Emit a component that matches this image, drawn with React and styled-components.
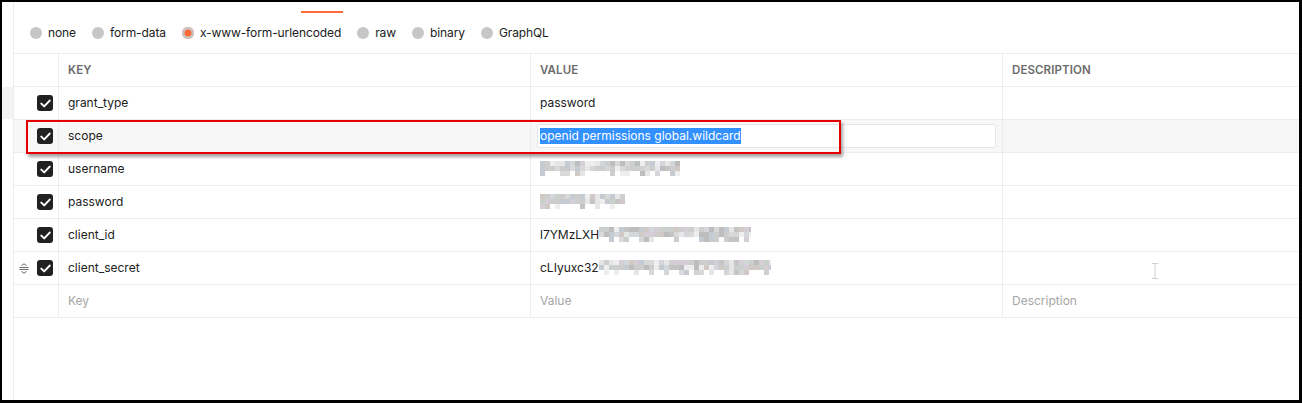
import React from "react";
import styled, { createGlobalStyle } from "styled-components";

const Global = createGlobalStyle`
  html, body { margin: 0; padding: 0; background: #fff; }
  body { font-family: Inter, "Noto Sans", sans-serif; -webkit-font-smoothing: antialiased; }
  * { box-sizing: border-box; }
`;

const Frame = styled.div`
  width: 1302px;
  height: 403px;
  border-style: solid;
  border-color: #000;
  border-width: 2px 3px 3px 2px;
  display: flex;
  background: #fff;
  overflow: hidden;
`;

const LeftStrip = styled.div`
  width: 11px;
  flex: none;
  display: flex;
  flex-direction: column;
`;

const StripShade = styled.div`
  margin-top: ${(p) => p.$top}px;
  height: ${(p) => p.$h}px;
  background: #f3f3f3;
`;

const Panel = styled.div`
  flex: 1;
  border-left: 1px solid #ececec;
  display: flex;
  flex-direction: column;
  position: relative;
`;

const TabStrip = styled.div`
  height: 11px;
  display: flex;
  align-items: flex-end;
  padding-left: 287px;
`;

const ActiveTab = styled.div`
  width: 42px;
  height: 2px;
  background: #ff6c37;
`;

const RadioRow = styled.div`
  height: 40px;
  display: flex;
  align-items: center;
  padding-left: 16px;
  gap: 16px;
  font-size: 12px;
  letter-spacing: -0.1px;
  color: #212121;
`;

const RadioItem = styled.label`
  display: flex;
  align-items: center;
  gap: 6px;
  line-height: 14px;
`;

const RadioDot = styled.span`
  width: 12px;
  height: 12px;
  border-radius: 50%;
  background: ${(p) => (p.$on ? "#ff6c37" : "#c6c6c6")};
  box-shadow: ${(p) => (p.$on ? "inset 0 0 0 2.5px #c6c6c6" : "none")};
  flex: none;
`;

const Table = styled.div`
  border-top: 1px solid #ececec;
  position: relative;
`;

const Row = styled.div`
  display: grid;
  grid-template-columns: 45px 472px 472px 1fr;
  height: 33px;
  border-bottom: 1px solid #ececec;
  background: ${(p) => (p.$active ? "#f7f7f7" : "#fff")};
`;

const Cell = styled.div`
  display: flex;
  align-items: center;
  padding: 0 9px 1px;
  font-size: 12px;
  color: ${(p) => (p.$placeholder ? "#a6a6a6" : "#212121")};
  border-right: ${(p) => (p.$last ? "none" : "1px solid #ececec")};
  white-space: nowrap;
  overflow: hidden;
`;

const HeadCell = styled(Cell)`
  font-size: 11.5px;
  font-weight: 600;
  color: #6b6b6b;
  letter-spacing: 0.1px;
`;

const CheckCell = styled.div`
  display: flex;
  align-items: center;
  justify-content: flex-end;
  padding-right: 5px;
  gap: 8px;
  border-right: 1px solid #ececec;
`;

const CheckBox = styled.span`
  width: 16px;
  height: 16px;
  border-radius: 3px;
  background: #212121;
  display: flex;
  align-items: center;
  justify-content: center;
`;

const ValueInput = styled.div`
  flex: 1;
  height: 24px;
  margin-left: -3px;
  margin-right: -3px;
  background: #fff;
  border: 1px solid #e6e6e6;
  border-radius: 2px;
  display: flex;
  align-items: center;
  padding-left: 2px;
`;

const Selected = styled.span`
  background: #3390ff;
  color: #fff;
  line-height: 16px;
`;

const Mosaic = styled.svg`
  display: block;
  flex: none;
  filter: blur(0.4px);
`;

const Highlight = styled.div`
  position: absolute;
  left: 12px;
  top: 66px;
  width: 815px;
  height: 34px;
  border: 2px solid #e40000;
  box-shadow: 2px 3px 3px rgba(0, 0, 0, 0.35);
  pointer-events: none;
`;

const Cursor = styled.svg`
  position: absolute;
  left: 1137px;
  top: 261px;
`;

function Check() {
  return (
    <CheckBox>
      <svg width="11" height="9" viewBox="0 0 11 9">
        <path d="M1.3 4.6 L4.2 7.4 L9.7 1.6" fill="none" stroke="#fff" strokeWidth="2" strokeLinecap="round" strokeLinejoin="round" />
      </svg>
    </CheckBox>
  );
}

function DragHandle() {
  return (
    <svg width="10" height="11" viewBox="0 0 10 11">
      <path d="M2.5 2.5 L5 0.8 L7.5 2.5" fill="none" stroke="#6b6b6b" strokeWidth="1" />
      <path d="M0.5 4.5 H9.5 M0.5 6.5 H9.5" stroke="#6b6b6b" strokeWidth="1" />
      <path d="M2.5 8.5 L5 10.2 L7.5 8.5" fill="none" stroke="#6b6b6b" strokeWidth="1" />
    </svg>
  );
}

function rng(seed) {
  let s = seed;
  return () => {
    s = (s * 9301 + 49297) % 233280;
    return s / 233280;
  };
}

const palette = ["#d9d9d9", "#cdcdcd", "#c4c4c4", "#e6e6e6", "#bdbdbd", "#d3d7db", "#d6ced6", "#cbd0cd", "#eeeeee", "#c4cbd2", "#d0c9c5"];

function Blur({ width, seed, rows = 3 }) {
  const r = rng(seed);
  const cell = 5;
  const cols = Math.ceil(width / cell);
  const rects = [];
  for (let y = 0; y < rows; y++) {
    for (let x = 0; x < cols; x++) {
      const v = r();
      const edge = y === rows - 1 ? 0.55 : 0;
      if (v < edge) continue;
      rects.push(
        <rect key={`${x}-${y}`} x={x * cell} y={y * cell} width={cell} height={cell} fill={palette[Math.floor(r() * palette.length)]} />
      );
    }
  }
  return (
    <Mosaic width={width} height={rows * cell} viewBox={`0 0 ${width} ${rows * cell}`}>
      {rects}
    </Mosaic>
  );
}

const rows = [
  { key: "grant_type", value: "password" },
  { key: "scope", active: true },
  { key: "username", blur: { w: 140, seed: 11 } },
  { key: "password", blur: { w: 85, seed: 23 } },
  { key: "client_id", value: "l7YMzLXH", blur: { w: 152, seed: 37 } },
  { key: "client_secret", value: "cLIyuxc32", blur: { w: 172, seed: 51 }, handle: true },
];

const radios = ["none", "form-data", "x-www-form-urlencoded", "raw", "binary", "GraphQL"];

export default function App() {
  return (
    <>
      <Global />
      <Frame>
        <LeftStrip>
          <StripShade $top={85} $h={32} />
        </LeftStrip>
        <Panel>
          <TabStrip>
            <ActiveTab />
          </TabStrip>
          <RadioRow>
            {radios.map((r) => (
              <RadioItem key={r}>
                <RadioDot $on={r === "x-www-form-urlencoded"} />
                {r}
              </RadioItem>
            ))}
          </RadioRow>
          <Table>
            <Row>
              <CheckCell />
              <HeadCell>KEY</HeadCell>
              <HeadCell>VALUE</HeadCell>
              <HeadCell $last>DESCRIPTION</HeadCell>
            </Row>
            {rows.map((row) => (
              <Row key={row.key} $active={row.active}>
                <CheckCell>
                  {row.handle && <DragHandle />}
                  <Check />
                </CheckCell>
                <Cell>{row.key}</Cell>
                <Cell>
                  {row.active ? (
                    <ValueInput>
                      <Selected>openid permissions global.wildcard</Selected>
                    </ValueInput>
                  ) : (
                    <>
                      {row.value}
                      {row.blur && <Blur width={row.blur.w} seed={row.blur.seed} />}
                    </>
                  )}
                </Cell>
                <Cell $last />
              </Row>
            ))}
            <Row>
              <CheckCell />
              <Cell $placeholder>Key</Cell>
              <Cell $placeholder>Value</Cell>
              <Cell $placeholder $last>Description</Cell>
            </Row>
            <Highlight />
          </Table>
          <Cursor width="8" height="16" viewBox="0 0 8 16">
            <path d="M1 0.5 H7 M4 0.5 V15.5 M1 15.5 H7" stroke="#cfcfcf" strokeWidth="1" fill="none" />
          </Cursor>
        </Panel>
      </Frame>
    </>
  );
}
